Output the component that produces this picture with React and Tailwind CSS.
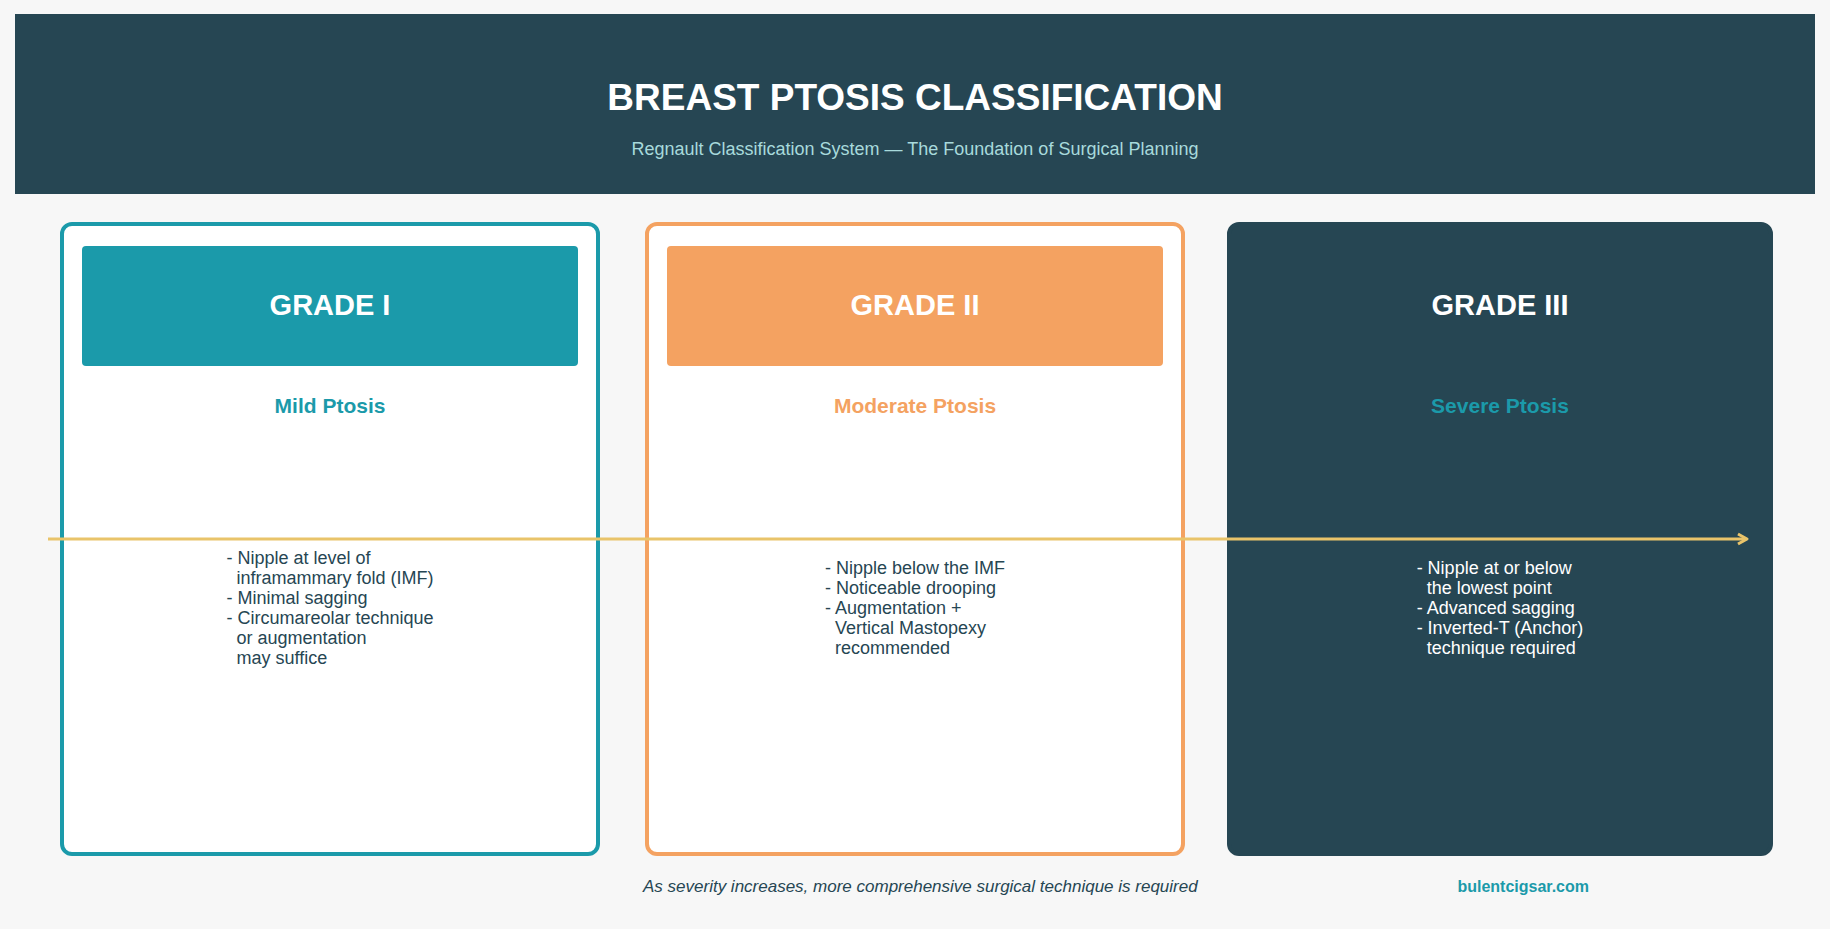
const GRADES = [
  {
    title: 'GRADE I', sub: 'Mild Ptosis', border: 'border-[#1b9aaa]', box: 'bg-[#1b9aaa]', card: 'bg-white',
    subColor: 'text-[#1b9aaa]', textColor: 'text-[#264653]', w: 'w-[540px]',
    text: '- Nipple at level of\n  inframammary fold (IMF)\n- Minimal sagging\n- Circumareolar technique\n  or augmentation\n  may suffice',
  },
  {
    title: 'GRADE II', sub: 'Moderate Ptosis', border: 'border-[#f4a261]', box: 'bg-[#f4a261]', card: 'bg-white',
    subColor: 'text-[#f4a261]', textColor: 'text-[#264653]', w: 'w-[540px]',
    text: '- Nipple below the IMF\n- Noticeable drooping\n- Augmentation +\n  Vertical Mastopexy\n  recommended',
  },
  {
    title: 'GRADE III', sub: 'Severe Ptosis', border: 'border-[#264653]', box: 'bg-transparent', card: 'bg-[#264653]',
    subColor: 'text-[#1b9aaa]', textColor: 'text-white', w: 'w-[546px]',
    text: '- Nipple at or below\n  the lowest point\n- Advanced sagging\n- Inverted-T (Anchor)\n  technique required',
  },
]

export default function App() {
  return (
    <div className="w-[1830px] h-[929px] bg-[#f7f7f7] pt-[14px] relative" style={{ fontFamily: '"Liberation Sans", Arial, sans-serif' }}>
      {/* Header */}
      <div className="mx-[15px] h-[180px] bg-[#264653] flex flex-col items-center">
        <h1 className="mt-[64px] text-[37px] leading-[40px] font-bold text-white">BREAST PTOSIS CLASSIFICATION</h1>
        <p className="mt-[21px] text-[18px] leading-[20px] text-[#a8dadc]">Regnault Classification System — The Foundation of Surgical Planning</p>
      </div>

      {/* Cards */}
      <div className="flex mt-[28px] pl-[60px]">
        {GRADES.map((g, i) => (
          <div key={g.title}
            className={`${g.w} ${g.card} ${g.border} h-[634px] border-4 rounded-[12px] px-[18px] pt-[20px] ${i === 0 ? 'mr-[45px]' : i === 1 ? 'mr-[42px]' : ''}`}>
            <div className={`h-[120px] rounded-[4px] ${g.box} flex items-center justify-center`}>
              <span className="text-[29px] font-bold text-white">{g.title}</span>
            </div>
            <p className={`mt-[28px] text-center text-[21px] leading-[24px] font-bold ${g.subColor}`}>{g.sub}</p>
            <div className="h-[380px] flex items-center justify-center">
              <p className={`whitespace-pre text-[18px] leading-[20px] ${g.textColor}`}>{g.text}</p>
            </div>
          </div>
        ))}
      </div>

      {/* Progress arrow */}
      <svg className="absolute left-[46px] top-[532px]" width="1706" height="14" viewBox="0 0 1706 14">
        <line x1="2" y1="7" x2="1700" y2="7" stroke="#e9c46a" strokeWidth="3" />
        <path d="M1692 2 L1701 7 L1692 12" fill="none" stroke="#e9c46a" strokeWidth="3" strokeLinejoin="round" />
      </svg>

      {/* Footer */}
      <div className="flex items-center mt-[18px] pl-[643px]">
        <p className="italic text-[17px] text-[#264653]">As severity increases, more comprehensive surgical technique is required</p>
        <p className="ml-auto mr-[241px] font-bold text-[16px] text-[#1b9aaa]">bulentcigsar.com</p>
      </div>
    </div>
  )
}
